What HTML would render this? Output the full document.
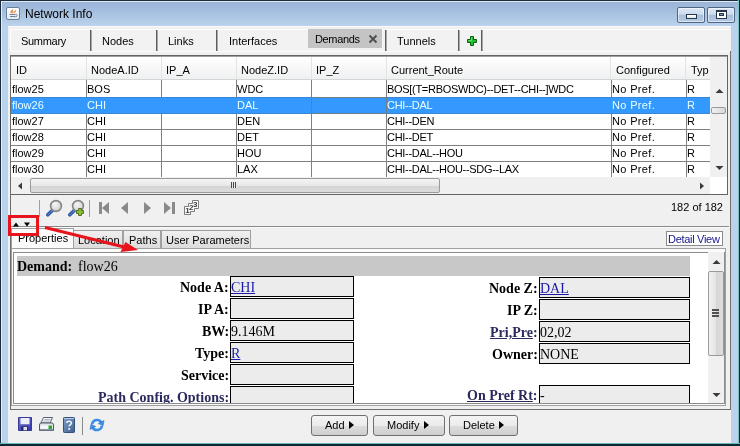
<!DOCTYPE html>
<html><head><meta charset="utf-8">
<style>
*{margin:0;padding:0;box-sizing:border-box}
html,body{width:740px;height:446px;overflow:hidden;background:#f0f0f0}
body{position:relative;font-family:"Liberation Sans",sans-serif;font-size:11px;color:#000}
.a{position:absolute}
.t{position:absolute;white-space:pre;line-height:13px;will-change:transform}
.s{position:absolute;white-space:pre;font-family:"Liberation Serif",serif;font-size:14px;line-height:16px;will-change:transform}
.b{font-weight:bold}
.lk{color:#1a1aa6;text-decoration:underline}
.nv{color:#2a2a5c;text-decoration:underline}
svg{position:absolute}
</style></head><body>
<div class="a" style="left:0px;top:0px;width:740px;height:446px;background:#b9d3ed"></div>
<div class="a" style="left:0px;top:0px;width:740px;height:27px;background:linear-gradient(#9ab5d8 0px,#9db8da 6px,#b9d1ea 25px)"></div>
<div class="a" style="left:0px;top:0px;width:740px;height:1px;background:#1c2c3c"></div>
<div class="a" style="left:1px;top:1px;width:738px;height:1px;background:#dfeaf4"></div>
<div class="a" style="left:0px;top:0px;width:1px;height:446px;background:#1c2c3c"></div>
<div class="a" style="left:738px;top:0px;width:1px;height:446px;background:#7cc0c4"></div>
<div class="a" style="left:739px;top:0px;width:1px;height:446px;background:#0c2a30"></div>
<div class="a" style="left:0px;top:443px;width:740px;height:1px;background:#6fb6bc"></div>
<div class="a" style="left:0px;top:444px;width:740px;height:2px;background:#0c2a30"></div>
<div class="a" style="left:1px;top:2px;width:1px;height:440px;background:#e4eef8"></div>
<div class="a" style="left:6px;top:7px;width:14px;height:13px;border:1px solid #6a7f9a;border-radius:2px;background:linear-gradient(#fdfdfd,#e4eaf2)"></div>
<svg style="left:7px;top:8px" width="12" height="11" viewBox="0 0 12 11"><path d="M3.5 5.2 C2.8 3.5,4.5 2.5,5.5 1 C5.8 2.6,7 3.2,6.2 5.2 Z M6.5 4.8 C6.8 3,8.2 2.6,9 1.5 C9.3 3,8.8 4.2,7.6 5 Z" fill="#e8995a"/><path d="M2.5 6.5 H8.5 M3 8.5 H8.5" stroke="#5f7592" stroke-width="0.9" fill="none"/><path d="M8.6 6.3 C10.8 6.3,10.6 8.8,8.6 8.8" stroke="#5f7592" stroke-width="0.9" fill="none"/></svg>
<div class="t" style="left:25px;top:7px;font-size:12px;line-height:14px">Network Info</div>
<div class="a" style="left:677px;top:7px;width:28px;height:16px;border:1px solid #4f6584;border-radius:2px;box-shadow:inset 0 0 0 1px rgba(255,255,255,0.55);background:linear-gradient(#dae6f3 0%,#cddcee 45%,#a8bfdb 50%,#b4cae4 100%)"></div>
<div class="a" style="left:686px;top:14px;width:11px;height:5px;border:1px solid #27364a;background:linear-gradient(#ffffff,#dfe6ee)"></div>
<div class="a" style="left:707px;top:7px;width:28px;height:16px;border:1px solid #4f6584;border-radius:2px;box-shadow:inset 0 0 0 1px rgba(255,255,255,0.55);background:linear-gradient(#dae6f3 0%,#cddcee 45%,#a8bfdb 50%,#b4cae4 100%)"></div>
<div class="a" style="left:716px;top:10px;width:11px;height:9px;border:1px solid #27364a;border-top-width:2px;background:#fff"></div>
<div class="a" style="left:719px;top:13px;width:5px;height:3px;border:1px solid #27364a;background:#7f93ad"></div>
<div class="a" style="left:8px;top:26px;width:723px;height:417px;background:#f0f0f0"></div>
<div class="a" style="left:8px;top:26px;width:723px;height:1px;background:#fbfbfb"></div>
<div class="a" style="left:730px;top:51px;width:1px;height:359px;background:#6e6e6e"></div>
<div class="a" style="left:10px;top:29px;width:720px;height:22px;background:#f2f2f2"></div>
<div class="a" style="left:10px;top:29px;width:720px;height:1px;background:#fdfdfd"></div>
<div class="a" style="left:10px;top:29px;width:1px;height:22px;background:#fdfdfd"></div>
<div class="a" style="left:10px;top:51px;width:720px;height:1px;background:#fbfbfb"></div>
<div class="t" style="left:21px;top:35px;letter-spacing:-0.3px">Summary</div>
<div class="t" style="left:102px;top:35px;">Nodes</div>
<div class="t" style="left:168px;top:35px;">Links</div>
<div class="t" style="left:229px;top:35px;">Interfaces</div>
<div class="a" style="left:90px;top:30px;width:1px;height:21px;background:#5c5c5c"></div>
<div class="a" style="left:91px;top:30px;width:1px;height:21px;background:#a8a8a8"></div>
<div class="a" style="left:156px;top:30px;width:1px;height:21px;background:#5c5c5c"></div>
<div class="a" style="left:157px;top:30px;width:1px;height:21px;background:#a8a8a8"></div>
<div class="a" style="left:216px;top:30px;width:1px;height:21px;background:#5c5c5c"></div>
<div class="a" style="left:217px;top:30px;width:1px;height:21px;background:#a8a8a8"></div>
<div class="a" style="left:385px;top:30px;width:1px;height:21px;background:#5c5c5c"></div>
<div class="a" style="left:386px;top:30px;width:1px;height:21px;background:#a8a8a8"></div>
<div class="a" style="left:458px;top:30px;width:1px;height:21px;background:#5c5c5c"></div>
<div class="a" style="left:459px;top:30px;width:1px;height:21px;background:#a8a8a8"></div>
<div class="a" style="left:481px;top:30px;width:1px;height:21px;background:#5c5c5c"></div>
<div class="a" style="left:482px;top:30px;width:1px;height:21px;background:#a8a8a8"></div>
<div class="a" style="left:308px;top:29px;width:74px;height:19px;background:#c4c4c4"></div>
<div class="t" style="left:315px;top:33px;letter-spacing:-0.35px">Demands</div>
<svg style="left:368px;top:34px" width="10" height="10" viewBox="0 0 10 10"><path d="M1.5 1.5 L8.5 8.5 M8.5 1.5 L1.5 8.5" stroke="#505050" stroke-width="2"/></svg>
<div class="t" style="left:397px;top:35px;">Tunnels</div>
<svg style="left:467px;top:36px" width="10" height="10" viewBox="0 0 10 10"><path d="M3.5 0.5 H6.5 V3.5 H9.5 V6.5 H6.5 V9.5 H3.5 V6.5 H0.5 V3.5 H3.5 Z" fill="#1cbf2c" stroke="#0a5c12" stroke-width="1"/><path d="M4.5 1.5 V4.5 H1.5" stroke="#7ee88a" stroke-width="0.8" fill="none"/></svg>
<div class="a" style="left:10px;top:55px;width:718px;height:140px;border:1px solid #646464;background:#fff"></div>
<div class="a" style="left:11px;top:56px;width:716px;height:1px;background:#a0a0a0"></div>
<div class="a" style="left:11px;top:57px;width:699px;height:23px;background:linear-gradient(#ffffff,#eff0f1);border-bottom:1px solid #d5d5d5"></div>
<div class="a" style="left:710px;top:57px;width:17px;height:120px;background:#f0f0f0"></div>
<div class="t" style="left:16px;top:64px;">ID</div>
<div class="t" style="left:91px;top:64px;">NodeA.ID</div>
<div class="a" style="left:86px;top:57px;width:1px;height:22px;background:#e3e3e3"></div>
<div class="t" style="left:166px;top:64px;">IP_A</div>
<div class="a" style="left:161px;top:57px;width:1px;height:22px;background:#e3e3e3"></div>
<div class="t" style="left:241px;top:64px;">NodeZ.ID</div>
<div class="a" style="left:236px;top:57px;width:1px;height:22px;background:#e3e3e3"></div>
<div class="t" style="left:316px;top:64px;">IP_Z</div>
<div class="a" style="left:311px;top:57px;width:1px;height:22px;background:#e3e3e3"></div>
<div class="t" style="left:391px;top:64px;">Current_Route</div>
<div class="a" style="left:386px;top:57px;width:1px;height:22px;background:#e3e3e3"></div>
<div class="t" style="left:616px;top:64px;">Configured</div>
<div class="a" style="left:610px;top:57px;width:1px;height:22px;background:#e3e3e3"></div>
<div class="t" style="left:691px;top:64px;">Typ</div>
<div class="a" style="left:685px;top:57px;width:1px;height:22px;background:#e3e3e3"></div>
<div class="a" style="left:11px;top:97px;width:699px;height:1px;background:#808080"></div>
<div class="a" style="left:11px;top:113px;width:699px;height:1px;background:#808080"></div>
<div class="a" style="left:11px;top:129px;width:699px;height:1px;background:#808080"></div>
<div class="a" style="left:11px;top:145px;width:699px;height:1px;background:#808080"></div>
<div class="a" style="left:11px;top:161px;width:699px;height:1px;background:#808080"></div>
<div class="a" style="left:86px;top:80px;width:1px;height:97px;background:#808080"></div>
<div class="a" style="left:161px;top:80px;width:1px;height:97px;background:#808080"></div>
<div class="a" style="left:236px;top:80px;width:1px;height:97px;background:#808080"></div>
<div class="a" style="left:311px;top:80px;width:1px;height:97px;background:#808080"></div>
<div class="a" style="left:386px;top:80px;width:1px;height:97px;background:#808080"></div>
<div class="a" style="left:611px;top:80px;width:1px;height:97px;background:#808080"></div>
<div class="a" style="left:686px;top:80px;width:1px;height:97px;background:#808080"></div>
<div class="a" style="left:11px;top:97px;width:699px;height:17px;background:#3399ff"></div>
<div class="a" style="left:11px;top:97px;width:699px;height:1px;background:#3a86d6"></div>
<div class="a" style="left:11px;top:113px;width:699px;height:1px;background:#3a86d6"></div>
<div class="a" style="left:311px;top:97px;width:76px;height:17px;border:1px solid #6f7d88"></div>
<div class="t" style="left:12px;top:83px;">flow25</div>
<div class="t" style="left:87px;top:83px;">BOS</div>
<div class="t" style="left:237px;top:83px;">WDC</div>
<div class="t" style="left:387px;top:83px;letter-spacing:-0.3px;">BOS[(T=RBOSWDC)--DET--CHI--]WDC</div>
<div class="t" style="left:612px;top:83px;letter-spacing:0.35px;">No Pref.</div>
<div class="t" style="left:687px;top:83px;">R</div>
<div class="t" style="left:12px;top:99px;color:#e8ffff;">flow26</div>
<div class="t" style="left:87px;top:99px;color:#e8ffff;">CHI</div>
<div class="t" style="left:237px;top:99px;color:#e8ffff;">DAL</div>
<div class="t" style="left:387px;top:99px;color:#e8ffff;letter-spacing:-0.3px;">CHI--DAL</div>
<div class="t" style="left:612px;top:99px;color:#e8ffff;letter-spacing:0.35px;">No Pref.</div>
<div class="t" style="left:687px;top:99px;color:#e8ffff;">R</div>
<div class="t" style="left:12px;top:115px;">flow27</div>
<div class="t" style="left:87px;top:115px;">CHI</div>
<div class="t" style="left:237px;top:115px;">DEN</div>
<div class="t" style="left:387px;top:115px;letter-spacing:-0.3px;">CHI--DEN</div>
<div class="t" style="left:612px;top:115px;letter-spacing:0.35px;">No Pref.</div>
<div class="t" style="left:687px;top:115px;">R</div>
<div class="t" style="left:12px;top:131px;">flow28</div>
<div class="t" style="left:87px;top:131px;">CHI</div>
<div class="t" style="left:237px;top:131px;">DET</div>
<div class="t" style="left:387px;top:131px;letter-spacing:-0.3px;">CHI--DET</div>
<div class="t" style="left:612px;top:131px;letter-spacing:0.35px;">No Pref.</div>
<div class="t" style="left:687px;top:131px;">R</div>
<div class="t" style="left:12px;top:147px;">flow29</div>
<div class="t" style="left:87px;top:147px;">CHI</div>
<div class="t" style="left:237px;top:147px;">HOU</div>
<div class="t" style="left:387px;top:147px;letter-spacing:-0.3px;">CHI--DAL--HOU</div>
<div class="t" style="left:612px;top:147px;letter-spacing:0.35px;">No Pref.</div>
<div class="t" style="left:687px;top:147px;">R</div>
<div class="t" style="left:12px;top:163px;">flow30</div>
<div class="t" style="left:87px;top:163px;">CHI</div>
<div class="t" style="left:237px;top:163px;">LAX</div>
<div class="t" style="left:387px;top:163px;letter-spacing:-0.3px;">CHI--DAL--HOU--SDG--LAX</div>
<div class="t" style="left:612px;top:163px;letter-spacing:0.35px;">No Pref.</div>
<div class="t" style="left:687px;top:163px;">R</div>
<svg style="left:715px;top:88px" width="9" height="6"><path d="M0.5 5 L4.5 1 L8.5 5 Z" fill="#3a3a3a"/></svg>
<div class="a" style="left:711px;top:107px;width:15px;height:7px;border:1px solid #9a9a9a;border-radius:2px;background:linear-gradient(90deg,#f2f2f2,#d8d8d8)"></div>
<svg style="left:715px;top:165px" width="9" height="6"><path d="M0.5 1 L4.5 5 L8.5 1 Z" fill="#3a3a3a"/></svg>
<div class="a" style="left:11px;top:177px;width:699px;height:17px;background:#f0f0f0"></div>
<svg style="left:17px;top:182px" width="6" height="8"><path d="M5 0.5 L1 4 L5 7.5 Z" fill="#3a3a3a"/></svg>
<div class="a" style="left:30px;top:178px;width:410px;height:15px;border:1px solid #9a9a9a;border-radius:2px;background:linear-gradient(#f4f4f4,#e8e8e8 50%,#d4d4d4 51%,#dcdcdc)"></div>
<div class="a" style="left:231px;top:182px;width:1px;height:6px;background:#4a4a4a"></div>
<div class="a" style="left:233px;top:182px;width:1px;height:6px;background:#4a4a4a"></div>
<div class="a" style="left:235px;top:182px;width:1px;height:6px;background:#4a4a4a"></div>
<div class="a" style="left:232px;top:182px;width:1px;height:6px;background:#e8e8e8"></div>
<div class="a" style="left:234px;top:182px;width:1px;height:6px;background:#e8e8e8"></div>
<div class="a" style="left:236px;top:182px;width:1px;height:6px;background:#e8e8e8"></div>
<svg style="left:699px;top:182px" width="6" height="8"><path d="M1 0.5 L5 4 L1 7.5 Z" fill="#3a3a3a"/></svg>
<div class="a" style="left:39px;top:200px;width:1px;height:17px;background:#a0a0a0"></div>
<div class="a" style="left:89px;top:200px;width:1px;height:17px;background:#a0a0a0"></div>
<div class="t" style="left:671px;top:201px;">182 of 182</div>
<div class="a" style="left:10px;top:226px;width:719px;height:1px;background:#8a8a8a"></div>
<svg style="left:46px;top:199px" width="18" height="18" viewBox="0 0 18 18"><defs><radialGradient id="lg" cx="0.4" cy="0.35" r="0.7"><stop offset="0" stop-color="#f6f6f6"/><stop offset="1" stop-color="#cfcfcf"/></radialGradient></defs><line x1="1.8" y1="15.8" x2="6.5" y2="11.2" stroke="#2f58a8" stroke-width="3.6" stroke-linecap="round"/><line x1="2" y1="15.6" x2="6.3" y2="11.4" stroke="#9cc0f0" stroke-width="1" stroke-dasharray="1.2 1"/><circle cx="10" cy="7" r="5.4" fill="url(#lg)" stroke="#858585" stroke-width="1.6"/></svg>
<svg style="left:68px;top:199px" width="18" height="18" viewBox="0 0 18 18"><defs><radialGradient id="lg" cx="0.4" cy="0.35" r="0.7"><stop offset="0" stop-color="#f6f6f6"/><stop offset="1" stop-color="#cfcfcf"/></radialGradient></defs><line x1="1.8" y1="15.8" x2="6.5" y2="11.2" stroke="#2f58a8" stroke-width="3.6" stroke-linecap="round"/><line x1="2" y1="15.6" x2="6.3" y2="11.4" stroke="#9cc0f0" stroke-width="1" stroke-dasharray="1.2 1"/><circle cx="10" cy="7" r="5.4" fill="url(#lg)" stroke="#858585" stroke-width="1.6"/><path d="M11 10 H13 V8 H16 V10 H18 V13 H16 V15 H13 V13 H11 Z" transform="translate(-2.5,1.5)" fill="#8cbc3c" stroke="#4a6a1a" stroke-width="0.9"/></svg>
<svg style="left:98px;top:201px" width="104" height="15" viewBox="0 0 104 15"><rect x="1" y="1" width="3" height="12" fill="#8a8a8a"/><path d="M4 7 L11 1 V13 Z" fill="#8a8a8a"/><path d="M23 7 L30 1 V13 Z" fill="#8a8a8a"/><path d="M46 1 L53 7 L46 13 Z" fill="#8a8a8a"/><path d="M66 1 L73 7 L66 13 Z" fill="#8a8a8a"/><rect x="74" y="1" width="3" height="12" fill="#8a8a8a"/></svg>
<svg style="left:183px;top:199px;will-change:transform" width="17" height="17" viewBox="0 0 17 17"><path d="M1.5 15.5 V7.5 H5.5 V4.5 H9.5 V1.5 H15.5 V9.5 H11.5 V12.5 H7.5 V15.5 Z" fill="#fdfdfd" stroke="#7c7c7c" stroke-width="1"/><g font-family="Liberation Sans" font-weight="bold" font-size="8" fill="#3c3c3c"><text x="2.3" y="14.3">1</text><text x="5.9" y="11.2">2</text><text x="10" y="8.2">3</text></g></svg>
<div class="a" style="left:10px;top:227px;width:720px;height:1px;background:#fafafa"></div>
<div class="a" style="left:73px;top:230px;width:50px;height:18px;border:1px solid #a0a0a0;border-bottom:none;background:linear-gradient(#f0f0f0,#dcdcdc)"></div>
<div class="a" style="left:123px;top:230px;width:38px;height:18px;border:1px solid #a0a0a0;border-bottom:none;background:linear-gradient(#f0f0f0,#dcdcdc)"></div>
<div class="a" style="left:161px;top:230px;width:90px;height:18px;border:1px solid #a0a0a0;border-bottom:none;background:linear-gradient(#f0f0f0,#dcdcdc)"></div>
<div class="a" style="left:11px;top:228px;width:63px;height:21px;border:1px solid #a0a0a0;border-bottom:none;background:#fbfbfb"></div>
<div class="t" style="left:18px;top:232px;">Properties</div>
<div class="t" style="left:78px;top:234px;">Location</div>
<div class="t" style="left:129px;top:234px;">Paths</div>
<div class="t" style="left:166px;top:234px;">User Parameters</div>
<div class="a" style="left:666px;top:231px;width:57px;height:15px;border:1px solid #8a8a8a;background:#fff"></div>
<div class="t" style="left:668px;top:233px;color:#16168a;letter-spacing:-0.3px">Detail View</div>
<div class="a" style="left:11px;top:248px;width:715px;height:158px;border:1px solid #a0a0a0;background:#fbfbfb"></div>
<div class="a" style="left:13px;top:252px;width:712px;height:152px;border:1px solid #8c8c8c;background:#fff"></div>
<div class="a" style="left:13px;top:253px;width:695px;height:150px;overflow:hidden">
<div class="a" style="left:4px;top:3px;width:673px;height:20px;background:#c8c8c8"></div>
<div class="s b" style="left:4px;top:6px">Demand:</div>
<div class="s " style="left:65px;top:6px">flow26</div>
<div class="a" style="left:217px;top:23px;width:124px;height:21px;border:1px solid #000;background:#ececec"></div>
<div class="s b" style="right:479px;top:27px">Node A:</div>
<div class="s lk" style="left:218px;top:27px">CHI</div>
<div class="a" style="left:526px;top:24px;width:151px;height:21px;border:1px solid #000;background:#ececec"></div>
<div class="s b" style="right:170px;top:28px">Node Z:</div>
<div class="s lk" style="left:527px;top:28px">DAL</div>
<div class="a" style="left:217px;top:45px;width:124px;height:21px;border:1px solid #000;background:#ececec"></div>
<div class="s b" style="right:479px;top:49px">IP A:</div>
<div class="a" style="left:526px;top:46px;width:151px;height:21px;border:1px solid #000;background:#ececec"></div>
<div class="s b" style="right:170px;top:50px">IP Z:</div>
<div class="a" style="left:217px;top:67px;width:124px;height:21px;border:1px solid #000;background:#ececec"></div>
<div class="s b" style="right:479px;top:71px">BW:</div>
<div class="s " style="left:218px;top:71px">9.146M</div>
<div class="a" style="left:526px;top:68px;width:151px;height:21px;border:1px solid #000;background:#ececec"></div>
<div class="s b" style="right:170px;top:72px"><span class="nv">Pri,Pre</span><span style="color:#2a2a5c">:</span></div>
<div class="s " style="left:527px;top:72px">02,02</div>
<div class="a" style="left:217px;top:89px;width:124px;height:21px;border:1px solid #000;background:#ececec"></div>
<div class="s b" style="right:479px;top:93px">Type:</div>
<div class="s lk" style="left:218px;top:93px">R</div>
<div class="a" style="left:526px;top:90px;width:151px;height:21px;border:1px solid #000;background:#ececec"></div>
<div class="s b" style="right:170px;top:94px">Owner:</div>
<div class="s " style="left:527px;top:94px">NONE</div>
<div class="a" style="left:217px;top:111px;width:124px;height:21px;border:1px solid #000;background:#ececec"></div>
<div class="s b" style="right:479px;top:115px">Service:</div>
<div class="a" style="left:217px;top:133px;width:124px;height:21px;border:1px solid #000;background:#ececec"></div>
<div class="s b" style="right:479px;top:137px"><span class="nv">Path Config. Options</span><span style="color:#2a2a5c">:</span></div>
<div class="a" style="left:526px;top:132px;width:151px;height:21px;border:1px solid #000;background:#ececec"></div>
<div class="s b" style="right:170px;top:135px"><span class="nv">On Pref Rt</span><span style="color:#2a2a5c">:</span></div>
<div class="s " style="left:527px;top:135px">-</div>
</div>
<div class="a" style="left:708px;top:252px;width:16px;height:151px;background:#f0f0f0"></div>
<svg style="left:712px;top:259px" width="9" height="6"><path d="M0.5 5 L4.5 1 L8.5 5 Z" fill="#3a3a3a"/></svg>
<div class="a" style="left:708px;top:271px;width:16px;height:85px;border:1px solid #9a9a9a;border-radius:2px;background:linear-gradient(90deg,#f2f2f2,#e4e4e4 50%,#d6d6d6 51%,#dedede)"></div>
<div class="a" style="left:712px;top:309px;width:7px;height:2px;background:#505050"></div>
<div class="a" style="left:712px;top:312px;width:7px;height:2px;background:#505050"></div>
<div class="a" style="left:712px;top:315px;width:7px;height:2px;background:#505050"></div>
<svg style="left:712px;top:392px" width="9" height="6"><path d="M0.5 1 L4.5 5 L8.5 1 Z" fill="#3a3a3a"/></svg>
<div class="a" style="left:10px;top:55px;width:1px;height:355px;background:#6e6e6e"></div>
<div class="a" style="left:10px;top:409px;width:721px;height:1px;background:#6e6e6e"></div>
<svg style="left:18px;top:417px" width="14" height="14" viewBox="0 0 14 14"><defs><linearGradient id="fg" x1="0" y1="0" x2="1" y2="1"><stop offset="0" stop-color="#7272dc"/><stop offset="1" stop-color="#3434a4"/></linearGradient></defs><path d="M0.5 0.5 H13.5 V13.5 H0.5 Z" fill="url(#fg)" stroke="#3a3a96" stroke-width="1"/><rect x="2.5" y="1" width="9" height="6.5" fill="#eceef9"/><rect x="2.5" y="7.5" width="9" height="1" fill="#5050b0"/><rect x="3" y="9.5" width="7" height="4" fill="#2a2a6a"/><rect x="5.5" y="10" width="3.5" height="3.2" fill="#dcdcec"/></svg>
<svg style="left:39px;top:417px" width="15" height="14" viewBox="0 0 15 14"><path d="M4.5 0.5 H13.5 L11 6 H2 Z" fill="#f6f8fa" stroke="#56606c" stroke-width="1"/><path d="M5.5 2.5 H11.5 M4.5 4 H10.5" stroke="#9aa4b0" stroke-width="0.8"/><path d="M2 6 H13 Q14.5 6 14.5 8 V13.5 H0.5 V8 Q0.5 6 2 6 Z" fill="#dfe4ea" stroke="#4e5866" stroke-width="1"/><rect x="1.5" y="8.5" width="12" height="3.5" fill="#f4f6f8"/><rect x="9.5" y="8.5" width="3.5" height="3.5" fill="#2ea82e"/><rect x="1" y="12" width="13" height="1.5" fill="#8a95a3"/></svg>
<svg style="left:63px;top:417px" width="12" height="16" viewBox="0 0 12 16"><defs><linearGradient id="hg" x1="0" y1="0" x2="1" y2="1"><stop offset="0" stop-color="#7f9ec8"/><stop offset="1" stop-color="#3f5f8e"/></linearGradient></defs><rect x="0.5" y="0.5" width="11" height="15" rx="0.8" fill="url(#hg)" stroke="#34507a" stroke-width="1"/><rect x="1" y="1" width="10" height="1" fill="#b8cce6"/><path d="M3.8 6 C3.8 3.6,8.4 3.6,8.4 6 C8.4 7.6,6.2 7.8,6.2 9.6" stroke="#eef3fa" stroke-width="1.6" fill="none"/><rect x="5.3" y="11" width="1.8" height="1.8" fill="#eef3fa"/></svg>
<div class="a" style="left:82px;top:417px;width:1px;height:18px;background:#8a8a8a"></div>
<svg style="left:89px;top:417px" width="16" height="16" viewBox="0 0 16 16"><g stroke="#3b8fe6" stroke-width="2.6" fill="none"><path d="M3.08 7.13 A5 5 0 0 1 12.33 5.5"/><path d="M12.92 8.87 A5 5 0 0 1 3.67 10.5"/></g><g fill="#3b8fe6" stroke="#2a6cc4" stroke-width="0.5"><path d="M14.1 8.8 L15.0 3.4 L9.3 6.6 Z"/><path d="M1.9 7.2 L1.0 12.6 L6.7 9.4 Z"/></g></svg>
<div class="a" style="left:311px;top:415px;width:57px;height:21px;border:1px solid #707070;border-radius:3px;background:linear-gradient(#f4f4f4 0%,#ebebeb 50%,#dddddd 51%,#cfcfcf 100%)"></div>
<div class="t" style="left:325px;top:419px;">Add</div>
<svg style="left:349px;top:421px" width="5" height="8"><path d="M0 0 L5 4 L0 8 Z" fill="#000"/></svg>
<div class="a" style="left:373px;top:415px;width:72px;height:21px;border:1px solid #707070;border-radius:3px;background:linear-gradient(#f4f4f4 0%,#ebebeb 50%,#dddddd 51%,#cfcfcf 100%)"></div>
<div class="t" style="left:387px;top:419px;">Modify</div>
<svg style="left:424px;top:421px" width="5" height="8"><path d="M0 0 L5 4 L0 8 Z" fill="#000"/></svg>
<div class="a" style="left:449px;top:415px;width:69px;height:21px;border:1px solid #707070;border-radius:3px;background:linear-gradient(#f4f4f4 0%,#ebebeb 50%,#dddddd 51%,#cfcfcf 100%)"></div>
<div class="t" style="left:463px;top:419px;">Delete</div>
<svg style="left:499px;top:421px" width="5" height="8"><path d="M0 0 L5 4 L0 8 Z" fill="#000"/></svg>
<div class="a" style="left:8px;top:215px;width:31px;height:21px;border:3px solid #e8141c"></div>
<svg style="left:12px;top:221px" width="22" height="6"><path d="M1 5.5 L4 1.5 L7 5.5 Z M12 1.5 L18 1.5 L15 5.5 Z" fill="#000"/></svg>
<svg style="left:38px;top:218px" width="104" height="38" viewBox="0 0 104 38"><line x1="7" y1="9.5" x2="88" y2="29.5" stroke="#e8141c" stroke-width="3"/><path d="M100 32 L87.5 24 L82.5 34 Z" fill="#e8141c"/></svg>
</body></html>
